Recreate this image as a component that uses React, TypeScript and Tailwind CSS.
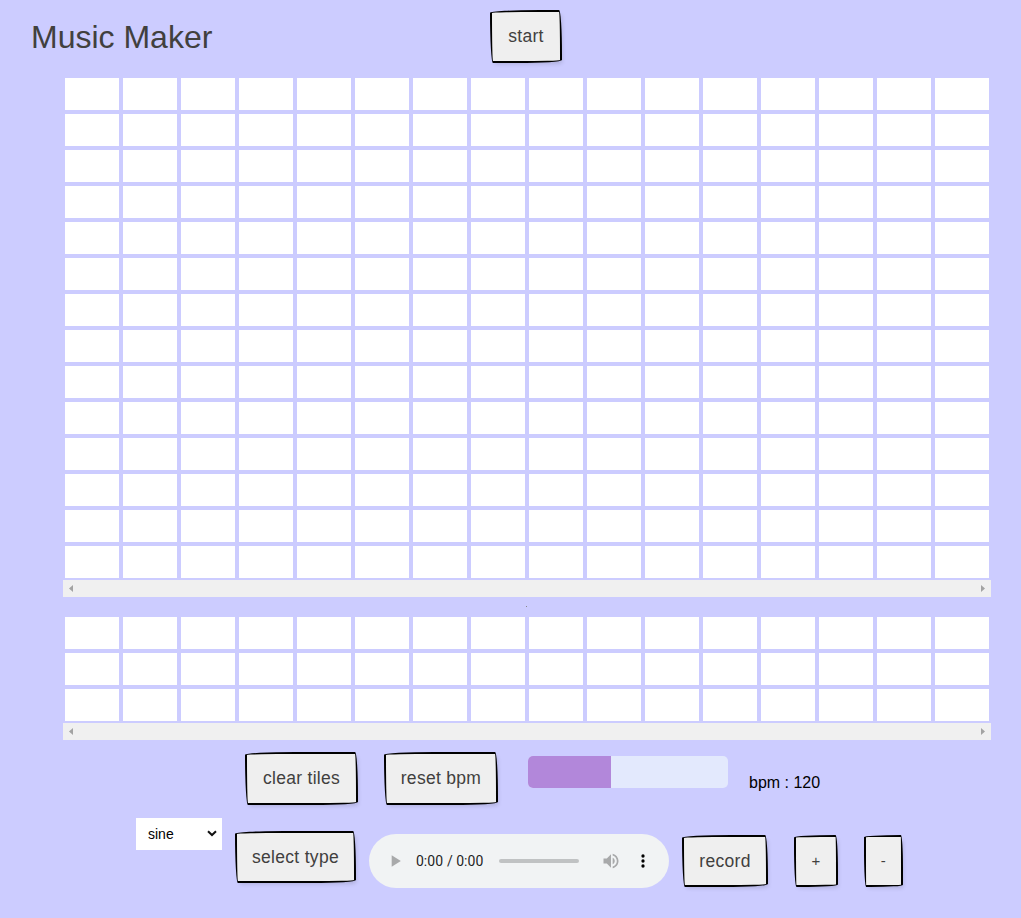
import React from "react";

const COLS = 16;

function Cell() {
  return <div className="w-[54px] h-[32px] m-[2px] bg-white shrink-0" />;
}

function Grid({ rows }: { rows: number }) {
  return (
    <div className="w-[928px] overflow-hidden">
      {Array.from({ length: rows }).map((_, r) => (
        <div key={r} className="flex">
          {Array.from({ length: COLS }).map((_, c) => (
            <Cell key={c} />
          ))}
        </div>
      ))}
    </div>
  );
}

function FakeScrollbar() {
  return (
    <div className="w-[928px] h-[17px] bg-[#f0f0f0] flex items-center justify-between px-[6px]">
      <svg width="4" height="7" viewBox="0 0 4 7">
        <path d="M4 0 L0 3.5 L4 7 Z" fill="#a3a3a3" />
      </svg>
      <svg width="4" height="7" viewBox="0 0 4 7">
        <path d="M0 0 L4 3.5 L0 7 Z" fill="#a3a3a3" />
      </svg>
    </div>
  );
}

function SketchButton({
  label,
  className,
  small,
}: {
  label: string;
  className: string;
  small?: boolean;
}) {
  return (
    <button
      className={
        "flex items-center justify-center shrink-0 bg-[#efefef] border-2 border-black text-[#41403e] tracking-[0.3px] [border-radius:255px_15px_225px_15px/15px_225px_15px_255px] shadow-[2px_3px_4px_-2px_rgba(0,0,0,0.15)] " +
        (small ? "text-[15px] " : "text-[17.5px] ") +
        className
      }
    >
      {label}
    </button>
  );
}

export default function App() {
  return (
    <div className="min-h-screen bg-[#ccccff] font-['Liberation_Sans',Arial,sans-serif]">
      {/* header */}
      <div className="flex items-start h-[76px]">
        <h1 className="ml-[31px] mt-[21px] text-[32px] leading-[32px] text-[#41403e] w-[181px] whitespace-nowrap">
          Music Maker
        </h1>
        <SketchButton label="start" className="ml-[278px] mt-[10px] w-[72px] h-[53px]" />
      </div>

      {/* main grid */}
      <div className="ml-[63px]">
        <Grid rows={14} />
        <FakeScrollbar />
        <div className="h-[18px] flex items-center">
          <div className="ml-[463px] w-[1px] h-[1px] bg-[#888]" />
        </div>
        <Grid rows={3} />
        <FakeScrollbar />
      </div>

      {/* controls row 1 */}
      <div className="flex items-start mt-[12px] pl-[245px]">
        <SketchButton label="clear tiles" className="w-[113px] h-[53px]" />
        <SketchButton label="reset bpm" className="ml-[26px] w-[114px] h-[53px]" />
        <div className="ml-[30px] mt-[4px] w-[200px] h-[32px] rounded-[5px] bg-[#e3e9fd] overflow-hidden">
          <div className="h-full bg-[#b287da]" style={{ width: "83px" }} />
        </div>
        <span className="ml-[21px] mt-[22px] text-[16px] leading-[18px] text-black">bpm : 120</span>
      </div>

      {/* controls row 2 */}
      <div className="flex items-start mt-[13px] pl-[136px]">
        <div className="relative w-[86px] h-[32px] bg-white shrink-0">
          <select className="appearance-none w-full h-full bg-white pl-[12px] text-[14px] text-black outline-none">
            <option>sine</option>
            <option>square</option>
            <option>sawtooth</option>
            <option>triangle</option>
          </select>
          <svg
            className="absolute right-[5px] top-[12px] pointer-events-none"
            width="10"
            height="7"
            viewBox="0 0 10 7"
          >
            <path d="M1 1.2 L5 5 L9 1.2" stroke="#111" strokeWidth="2" fill="none" />
          </svg>
        </div>
        <SketchButton label="select type" className="ml-[13px] mt-[13px] w-[121px] h-[52px]" />
        <audio controls className="ml-[13px] mt-[16px] w-[300px] h-[54px] shrink-0" />
        <SketchButton label="record" className="ml-[13px] mt-[17px] w-[86px] h-[52px]" />
        <SketchButton label="+" small className="ml-[26px] mt-[17px] w-[44px] h-[52px]" />
        <SketchButton label="-" small className="ml-[26px] mt-[17px] w-[39px] h-[52px]" />
      </div>
    </div>
  );
}
